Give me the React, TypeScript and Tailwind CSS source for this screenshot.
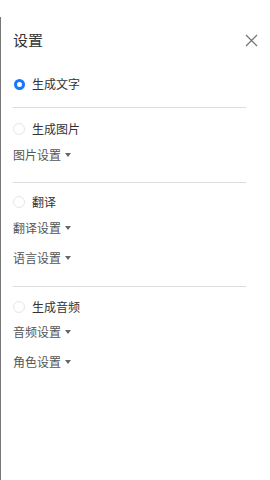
import React from 'react';

const font = { fontFamily: '"Noto Sans CJK SC", "Noto Sans", sans-serif' };

const Radio: React.FC<{ checked?: boolean; label: string }> = ({ checked, label }) => (
  <label className="flex items-center h-[22px]">
    {checked ? (
      <span className="ml-[1px] w-[11px] h-[11px] rounded-full border-[3px] border-[#1677ff] bg-white" />
    ) : (
      <span className="w-[12px] h-[12px] rounded-full border border-[#e6e6e6] bg-white" />
    )}
    <span className="ml-[7px] text-[12px] text-[#333]">{label}</span>
  </label>
);

const Select: React.FC<{ label: string }> = ({ label }) => (
  <div className="flex items-center h-[22px] text-[12px] text-[#555]">
    {label}
    <svg width="6" height="4" viewBox="0 0 6 4" className="ml-[4px]">
      <path d="M0 0h6L3 4z" fill="#666" />
    </svg>
  </div>
);

export default function App() {
  return (
    <div className="w-[270px] h-[480px] bg-white" style={font}>
      <div className="mt-[17px] h-[463px] border-l border-[#777] pl-[12px] pr-[24px]">
        <div className="flex items-center justify-between h-[46px]">
          <h2 className="text-[15px] text-[#333] font-normal">设置</h2>
          <svg width="13" height="13" viewBox="0 0 13 13" className="-mr-[12px]">
            <path d="M1 1l11 11M12 1L1 12" stroke="#777" strokeWidth="1.3" />
          </svg>
        </div>
        <div className="mt-[10px]">
          <Radio checked label="生成文字" />
        </div>
        <div className="mt-[12px] border-t border-[#ddd]" />
        <div className="mt-[10px] flex flex-col gap-[4px]">
          <Radio label="生成图片" />
          <Select label="图片设置" />
        </div>
        <div className="mt-[16px] border-t border-[#ddd]" />
        <div className="mt-[8px] flex flex-col gap-[4px]">
          <Radio label="翻译" />
          <Select label="翻译设置" />
          <div className="mt-[4px]">
            <Select label="语言设置" />
          </div>
        </div>
        <div className="mt-[17px] border-t border-[#ddd]" />
        <div className="mt-[9px] flex flex-col gap-[3px]">
          <Radio label="生成音频" />
          <Select label="音频设置" />
          <div className="mt-[5px]">
            <Select label="角色设置" />
          </div>
        </div>
      </div>
    </div>
  );
}
